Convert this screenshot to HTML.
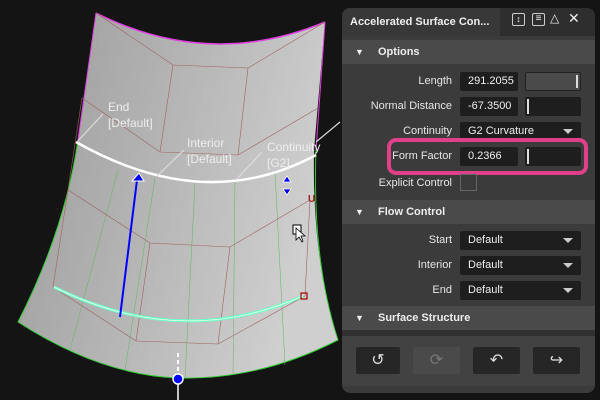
<!DOCTYPE html>
<html><head><style>
body{margin:0;width:600px;height:400px;background:#141414;overflow:hidden;position:relative;font-family:"Liberation Sans",sans-serif;}
.p{position:absolute;}
.panel{left:342px;top:8px;width:253px;height:385px;background:#3b3b3b;border-radius:8px;overflow:hidden;}
.lbl{position:absolute;color:#e6e6e6;font-size:11px;text-align:right;width:110px;}
.in{position:absolute;background:#1e1e1e;border-radius:2px;color:#eee;font-size:11px;height:19px;line-height:19px;padding-left:8px;box-sizing:border-box;}
.hdr{position:absolute;left:0;width:253px;height:24px;background:#4a4a4a;color:#eee;font-size:11px;font-weight:bold;line-height:24px;}
.hdr span{position:absolute;left:13px;font-size:9px;}
.hdr b{position:absolute;left:36px;}
.arr{position:absolute;right:8px;top:7px;width:0;height:0;border-left:5px solid transparent;border-right:5px solid transparent;border-top:5px solid #ccc;}
.btn{position:absolute;top:339px;height:27px;background:#262626;border-radius:2px;color:#ddd;font-size:16px;text-align:center;line-height:27px;}
</style></head><body>
<svg class="p" style="left:0;top:0" width="342" height="400">
<defs><linearGradient id="g" x1="0" y1="0" x2="1" y2="0.3"><stop offset="0" stop-color="#9a9a9a"/><stop offset="0.5" stop-color="#b4b4b4"/><stop offset="1" stop-color="#cfcfcf"/></linearGradient></defs>
<path d="M96,13 Q210,70 325,22 L314,150 Q312,260 338,340 Q260,380 178,378 Q100,375 18,322 Q65,230 78,140 Z" fill="url(#g)"/>
<path d="M96,13 Q210,70 325,22" stroke="#e040e0" stroke-width="1.5" fill="none"/>
<path d="M96,13 L78,140 M325,22 L316,150" stroke="#e040e0" stroke-width="1" fill="none"/>
<path d="M78,140 Q65,230 18,322 Q100,375 178,378 Q260,380 338,340 Q312,260 316,150" stroke="#3c3" stroke-width="1" fill="none"/>
<g stroke="#5cb85c" stroke-width="0.5" fill="none"><path d="M118,170 L70,350"/><path d="M155,178 L125,370"/><path d="M195,183 L185,378"/><path d="M235,180 L233,375"/><path d="M275,172 L285,365"/></g>
<g stroke="#a06060" stroke-width="0.6" fill="none"><path d="M82,98 L160,152 L238,155 L318,108"/><path d="M68,190 L150,243 L230,247 L310,200 L305,296"/><path d="M53,287 L136,341 L218,344 L305,296"/><path d="M68,190 L53,287 M136,341 L150,243 M218,344 L230,247"/><path d="M82,98 L68,190 M173,65 L160,152 M248,68 L238,155"/><path d="M96,13 L173,65 L248,68 L325,22"/></g>
<path d="M76,142 Q205,215 316,155" stroke="#fff" stroke-width="2.5" fill="none"/>
<path d="M54,287 Q180,350 303,296" stroke="#6fc" stroke-width="3" fill="none"/>
<path d="M54,287 Q180,350 303,296" stroke="#dfd" stroke-width="1" fill="none"/>
<g stroke="#ddd" stroke-width="1.2"><path d="M77,142 L103,114"/><path d="M157,176 L184,150"/><path d="M236,180 L262,152"/><path d="M316,142 L340,122"/></g>
<path d="M120,317 L137,180" stroke="#00f" stroke-width="2"/>
<path d="M132,181 L139,173 L144,181 Z" fill="#00f" stroke="#fff"/>
<path d="M283,182 L287,176 L291,182 Z M283,189 L291,189 L287,195 Z" fill="#00f" stroke="#fff" stroke-width="0.8"/>
<rect x="301" y="293" width="6" height="6" fill="none" stroke="#a00" stroke-width="1.2"/>
<text x="308" y="202" fill="#a02020" font-size="10" font-weight="bold" font-family="Liberation Sans">U</text>
<path d="M178,353 L178,374" stroke="#fff" stroke-width="2" stroke-dasharray="4,3"/>
<ellipse cx="178" cy="379" rx="5" ry="5" fill="#00f" stroke="#fff" stroke-width="1.5"/>
<path d="M178,384 L178,400" stroke="#fff" stroke-width="1.5"/>
<rect x="293" y="225" width="8" height="9" fill="#fff" stroke="#000"/>
<path d="M296,228 L296,240 L299,237 L302,242 L303,241 L301,236 L305,236 Z" fill="#fff" stroke="#000" stroke-width="0.8"/>
<g fill="#eee" font-size="12" font-family="Liberation Sans">
<text x="108" y="111">End</text><text x="108" y="127">[Default]</text>
<text x="187" y="147">Interior</text><text x="187" y="163">[Default]</text>
<text x="267" y="151">Continuity</text><text x="267" y="167">[G2]</text></g>
</svg>
<div class="p panel">
<div class="p" style="left:0;top:0;width:253px;height:28px;background:#2e2e2e"></div>
<div class="p" style="left:0;top:0;width:158px;height:28px;background:#383838;color:#eee;font-size:11px;font-weight:bold;line-height:28px;padding-left:8px;box-sizing:border-box">Accelerated Surface Con...</div>
<div class="p" style="left:170px;top:5px;width:11px;height:11px;border:1px solid #ccc;border-radius:2px;color:#eee;font-size:9px;text-align:center;line-height:11px">↕</div>
<div class="p" style="left:190px;top:5px;width:11px;height:11px;border:1px solid #ccc;border-radius:2px;color:#eee;font-size:10px;text-align:center;line-height:10px">≡</div>
<div class="p" style="left:208px;top:3px;color:#eee;font-size:12px">△</div>
<div class="p" style="left:226px;top:2px;color:#eee;font-size:14px">✕</div>
<div class="hdr" style="top:32px"><span>▼</span><b>Options</b></div>
<div class="lbl" style="left:0;top:67px">Length</div>
<div class="in" style="left:118px;top:64px;width:58px">291.2055</div>
<div class="in" style="left:183px;top:64px;width:56px;background:#4a4a4a;border:1px solid #222"><div class="p" style="right:2px;top:2px;width:2px;height:13px;background:#ddd"></div></div>
<div class="lbl" style="left:0;top:92px">Normal Distance</div>
<div class="in" style="left:118px;top:89px;width:58px">-67.3500</div>
<div class="in" style="left:183px;top:89px;width:56px"><div class="p" style="left:2px;top:2px;width:2px;height:15px;background:#ddd"></div></div>
<div class="lbl" style="left:0;top:117px">Continuity</div>
<div class="in" style="left:118px;top:114px;width:121px">G2 Curvature<div class="arr"></div></div>
<div class="lbl" style="left:0;top:142px">Form Factor</div>
<div class="in" style="left:118px;top:139px;width:58px">0.2366</div>
<div class="in" style="left:183px;top:139px;width:56px"><div class="p" style="left:2px;top:2px;width:2px;height:15px;background:#ddd"></div></div>
<div class="p" style="left:45px;top:130px;width:201px;height:37px;border:4px solid #e0408a;border-radius:9px;box-sizing:border-box"></div>
<div class="lbl" style="left:0;top:169px">Explicit Control</div>
<div class="p" style="left:118px;top:166px;width:17px;height:17px;border:1px solid #666;box-sizing:border-box"></div>
<div class="hdr" style="top:192px"><span>▼</span><b>Flow Control</b></div>
<div class="lbl" style="left:0;top:226px">Start</div>
<div class="in" style="left:118px;top:223px;width:121px">Default<div class="arr"></div></div>
<div class="lbl" style="left:0;top:251px">Interior</div>
<div class="in" style="left:118px;top:248px;width:121px">Default<div class="arr"></div></div>
<div class="lbl" style="left:0;top:276px">End</div>
<div class="in" style="left:118px;top:273px;width:121px">Default<div class="arr"></div></div>
<div class="hdr" style="top:298px"><span>▼</span><b>Surface Structure</b></div>
<div class="p" style="left:0;top:322px;width:253px;height:6px;background:#303030"></div>
<div class="p" style="left:0;top:328px;width:253px;height:50px;background:#424242"></div>
<div class="btn" style="left:14px;width:44px">↺</div>
<div class="btn" style="left:71px;width:47px;background:#4a4a4a;color:#777">⟳</div>
<div class="btn" style="left:131px;width:47px">↶</div>
<div class="btn" style="left:191px;width:47px">↪</div>
</div>
</body></html>
